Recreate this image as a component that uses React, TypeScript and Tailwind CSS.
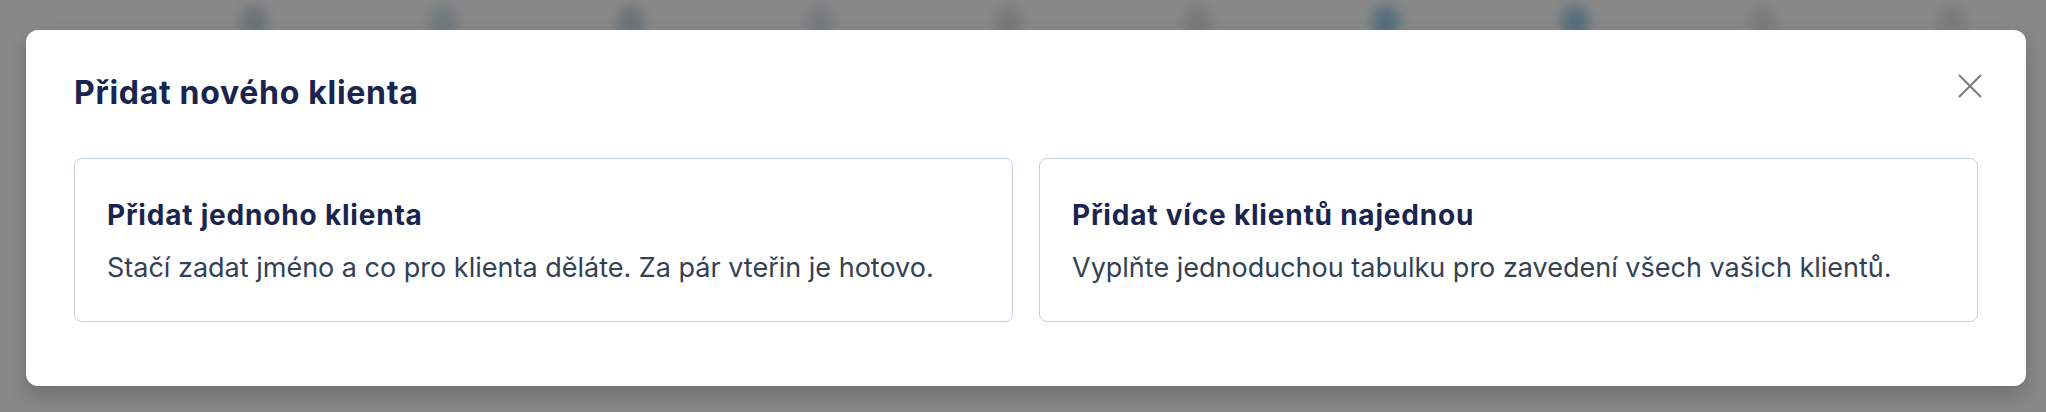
import React from "react";

const blobs = [
  "bg-[#5f6b72]",
  "bg-[#66737a]",
  "bg-[#5f6b72]",
  "bg-[#6d767b]",
  "bg-[#737373]",
  "bg-[#737373]",
  "bg-[#3f6478]",
  "bg-[#3f6478]",
  "bg-[#767676]",
  "bg-[#767676]",
];

function OptionCard({ title, text }: { title: string; text: string }) {
  return (
    <button className="flex-1 text-left rounded-lg border border-[#c5d0dd] bg-white px-8 pt-[38px] pb-[35px] hover:border-[#94a3b8] transition-colors">
      <h3 className="font-['Inter',sans-serif] text-[28px] leading-9 font-bold tracking-[0.8px] text-[#19244f]">{title}</h3>
      <p className="mt-[17px] font-['Inter',sans-serif] text-[27px] leading-9 text-[#334155]">{text}</p>
    </button>
  );
}

export default function App() {
  return (
    <div className="relative w-[2046px] h-[412px] overflow-hidden bg-[#888888]">
      {/* Blurred page behind the backdrop */}
      <div className="absolute inset-x-0 top-0 flex justify-between pl-[240px] pr-[80px] pt-[6px] blur-[6px] opacity-70">
        {blobs.map((tone, i) => (
          <div key={i} className={`w-[28px] h-[30px] rounded-full ${tone}`} />
        ))}
      </div>

      <div className="relative pt-[30px] pl-[26px]">
        {/* Modal */}
        <div className="w-[2000px] rounded-xl bg-white px-12 pt-[43px] pb-16 shadow-[0_10px_20px_rgba(0,0,0,0.18)]">
          <div className="flex items-start justify-between">
            <h2 className="font-['Inter',sans-serif] text-[32px] leading-10 font-bold tracking-[0.7px] text-[#19244f]">
              Přidat nového klienta
            </h2>
            <button className="mt-px -mr-1 w-6 h-6 text-[#7b7b7b]" aria-label="Zavřít">
              <svg viewBox="0 0 24 24" width="24" height="24" fill="none" stroke="currentColor" strokeWidth="2">
                <path d="M1 1L23 23M23 1L1 23" />
              </svg>
            </button>
          </div>
          <div className="mt-[45px] flex gap-[26px]">
            <OptionCard
              title="Přidat jednoho klienta"
              text="Stačí zadat jméno a co pro klienta děláte. Za pár vteřin je hotovo."
            />
            <OptionCard
              title="Přidat více klientů najednou"
              text="Vyplňte jednoduchou tabulku pro zavedení všech vašich klientů."
            />
          </div>
        </div>
      </div>
    </div>
  );
}
